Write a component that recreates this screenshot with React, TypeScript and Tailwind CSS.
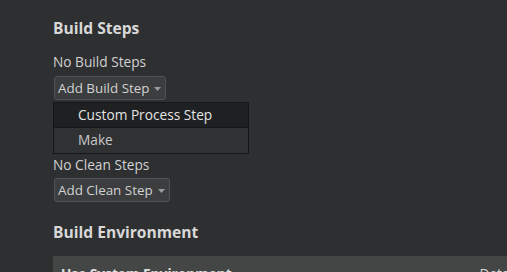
import React from "react";

const Caret = () => (
  <svg width="7" height="4" viewBox="0 0 7 4" className="ml-[5px] mt-[1px]">
    <path d="M0 0 L7 0 L3.5 4 Z" fill="#9a9b9c" />
  </svg>
);

export default function App() {
  return (
    <div
      className="w-[507px] h-[272px] overflow-hidden bg-[#2e2f31] text-[#d2d2d2] relative"
      style={{ fontFamily: '"Open Sans", "Noto Sans", sans-serif' }}
    >
      <div className="pl-[53px] pt-[17px] flex flex-col items-start">
        <div className="text-[15.6px] font-bold leading-[22px] text-[#d8d8d8]">Build Steps</div>
        <div className="mt-[13px] text-[13.7px] leading-[19px]">No Build Steps</div>
        <div className="mt-[5px] ml-[1px] h-[24px] pl-[3px] pr-[4px] flex items-center rounded-[3px] border border-[#505254] bg-[#3b3d3f] text-[13.4px] leading-[19px]">
          Add Build Step
          <Caret />
        </div>
        <div className="mt-[2px] w-[196px] border border-[#151617] bg-[#303133] flex flex-col text-[13.7px]">
          <div className="h-[25px] flex items-center pl-[24px] bg-[#1f2021] text-[#e4e4e4] border-b border-[#151617]">
            Custom Process Step
          </div>
          <div className="h-[25px] flex items-center pl-[24px] text-[#c8c8c8]">Make</div>
        </div>
        <div className="mt-[1px] text-[13.7px] leading-[19px]">No Clean Steps</div>
        <div className="mt-[4px] ml-[1px] h-[24px] pl-[3px] pr-[4px] flex items-center rounded-[3px] border border-[#505254] bg-[#3b3d3f] text-[13.4px] leading-[19px]">
          Add Clean Step
          <Caret />
        </div>
        <div className="mt-[19px] text-[15.6px] font-bold leading-[22px] text-[#d8d8d8]">Build Environment</div>
      </div>
      <div className="absolute left-[53px] top-[256px] right-0 h-[30px] bg-[#444645] flex items-start pt-[8px] pl-[8px] text-[13.7px]">
        <span className="font-bold text-[#e0e0e0]">Use System Environment</span>
        <span className="ml-auto mr-[-16px] text-[#d8d8d8]">Details</span>
      </div>
    </div>
  );
}
